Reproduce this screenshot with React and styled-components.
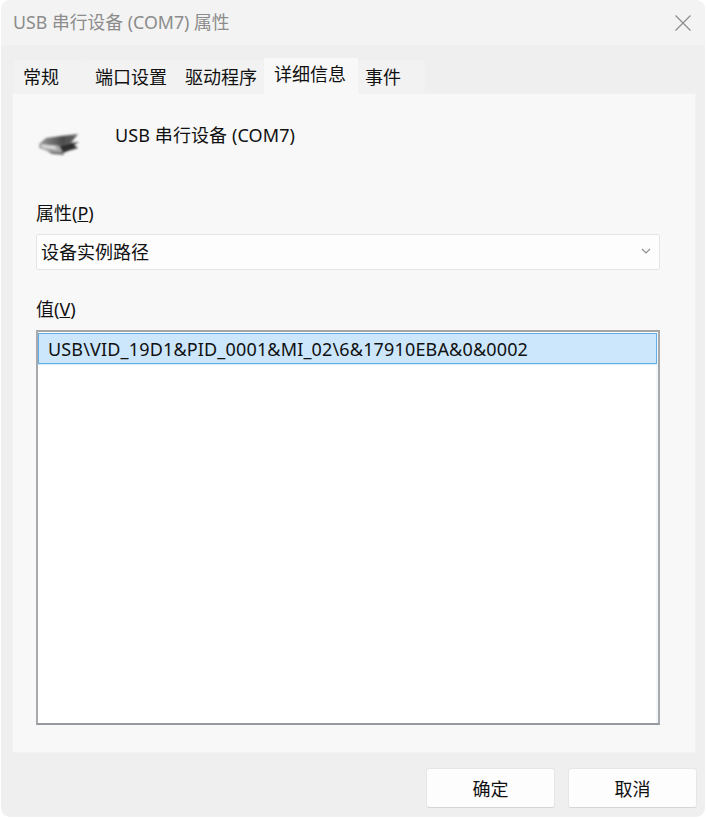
import React from 'react';
import styled, { createGlobalStyle } from 'styled-components';

const GlobalStyle = createGlobalStyle`
  html, body {
    margin: 0;
    padding: 0;
    background: #fff;
  }
  body {
    font-family: "Noto Sans", "Noto Sans CJK SC", sans-serif;
    font-size: 18px;
    color: #1a1a1a;
  }
  * {
    box-sizing: border-box;
  }
`;

const tabs = [
  { label: '常规', width: 72, inset: 8 },
  { label: '端口设置', width: 90, inset: 8 },
  { label: '驱动程序', width: 88, inset: 8 },
  { label: '详细信息', width: 94, inset: 9, active: true },
  { label: '事件', width: 67, inset: 6 },
];

const DeviceIcon = () => (
  <svg width="44" height="26" viewBox="0 0 44 26">
    <defs>
      <filter id="soft" x="-10%" y="-10%" width="120%" height="120%">
        <feGaussianBlur stdDeviation="0.8" />
      </filter>
      <linearGradient id="top" x1="0" y1="0" x2="1" y2="0">
        <stop offset="0" stopColor="#9a9a9a" />
        <stop offset="0.6" stopColor="#4c4c4c" />
        <stop offset="1" stopColor="#6a6a6a" />
      </linearGradient>
    </defs>
    <g filter="url(#soft)">
      <path d="M2 13 L9 7 L24 5 L41 3 L34 12 L22 15 Z" fill="url(#top)" />
      <path d="M2 13 L22 15 L26 21 L10 20 L2 17 Z" fill="#a8a8a8" />
      <path d="M4 14 L18 15.5 L20 18 L6 16.5 Z" fill="#e4e4e4" />
      <path d="M22 15 L34 12 L42 11 L37 14 L41 17 L31 20 L26 22 Z" fill="#2e2e2e" />
      <path d="M10 20 L26 21 L27 24 L15 23 Z" fill="#6f6f6f" />
    </g>
  </svg>
);

const App = () => (
  <>
    <GlobalStyle />
    <Window>
      <TitleBar>
        <Title>USB 串行设备 (COM7) 属性</Title>
        <CloseButton>
          <svg width="16" height="16" viewBox="0 0 16 16">
            <path d="M0.5 0.5 L15.5 15.5 M15.5 0.5 L0.5 15.5" stroke="#8b8b8b" strokeWidth="1.2" />
          </svg>
        </CloseButton>
      </TitleBar>
      <Body>
        <TabStrip>
          {tabs.map((tab) => (
            <Tab key={tab.label} $active={tab.active} $width={tab.width} $inset={tab.inset}>
              {tab.label}
            </Tab>
          ))}
        </TabStrip>
        <Panel>
          <DeviceRow>
            <IconWrapper>
              <DeviceIcon />
            </IconWrapper>
            <DeviceName>USB 串行设备 (COM7)</DeviceName>
          </DeviceRow>
          <FieldLabel>
            属性(<u>P</u>)
          </FieldLabel>
          <Select>
            <span>设备实例路径</span>
            <svg width="10" height="6" viewBox="0 0 10 6">
              <path d="M1 1 L5 5 L9 1" fill="none" stroke="#8f8f8f" strokeWidth="1.2" />
            </svg>
          </Select>
          <ValueLabel>
            值(<u>V</u>)
          </ValueLabel>
          <ListBox>
            <ListItem>USB\VID_19D1&amp;PID_0001&amp;MI_02\6&amp;17910EBA&amp;0&amp;0002</ListItem>
          </ListBox>
        </Panel>
        <Footer>
          <Button>确定</Button>
          <Button>取消</Button>
        </Footer>
      </Body>
    </Window>
  </>
);

export default App;

const Window = styled.div`
  width: 704px;
  height: 817px;
  margin-left: 1px;
  display: flex;
  flex-direction: column;
  background: #efefef;
  border-radius: 9px;
  overflow: hidden;
`;

const TitleBar = styled.div`
  height: 45px;
  flex-shrink: 0;
  display: flex;
  align-items: center;
  justify-content: space-between;
  padding: 0 14px 0 12px;
  background: #f3f3f3;
`;

const Title = styled.div`
  margin-top: -3px;
  font-size: 17.8px;
  color: #8c8c8c;
  white-space: nowrap;
`;

const CloseButton = styled.div`
  display: flex;
  width: 16px;
  height: 16px;
`;

const Body = styled.div`
  flex: 1;
  display: flex;
  flex-direction: column;
  padding: 13px 8px 9px 11px;
`;

const TabStrip = styled.div`
  height: 35px;
  padding-left: 2px;
  display: flex;
  align-items: flex-end;
  position: relative;
  z-index: 1;
`;

const Tab = styled.div`
  width: ${(p) => p.$width}px;
  height: ${(p) => (p.$active ? '36px' : '33px')};
  margin-bottom: ${(p) => (p.$active ? '-1px' : '0')};
  padding: 0 0 ${(p) => (p.$active ? '6px' : '0')} ${(p) => p.$inset}px;
  display: flex;
  align-items: center;
  font-size: 18px;
  line-height: 1;
  color: #111;
  white-space: nowrap;
  background: ${(p) => (p.$active ? '#f8f8f8' : '#f2f2f2')};
  border: 1px solid ${(p) => (p.$active ? '#f8f8f8' : '#f1f1f1')};
  border-bottom: none;
`;

const Panel = styled.div`
  width: 684px;
  height: 660px;
  flex-shrink: 0;
  display: flex;
  flex-direction: column;
  padding: 0 35px 0 23px;
  background: #f8f8f8;
  border: 1px solid #f2f2f2;
`;

const DeviceRow = styled.div`
  height: 72px;
  display: flex;
  align-items: flex-start;
`;

const IconWrapper = styled.div`
  width: 79px;
  padding: 37px 0 0 1px;
  flex-shrink: 0;
`;

const DeviceName = styled.div`
  margin-top: 28px;
  font-size: 18px;
  line-height: 26px;
  letter-spacing: 0.1px;
  color: #111;
  white-space: nowrap;
`;

const FieldLabel = styled.div`
  margin-top: 34px;
  height: 26px;
  font-size: 18px;
  line-height: 26px;
  color: #111;
`;

const ValueLabel = styled(FieldLabel)`
  margin-top: 26px;
`;

const Select = styled.div`
  width: 624px;
  height: 36px;
  margin-top: 8px;
  padding: 0 8px 2px 4px;
  display: flex;
  align-items: center;
  justify-content: space-between;
  background: #fdfdfd;
  border: 1px solid #e5e5e5;
  border-radius: 2px;
  font-size: 18px;
  color: #111;
`;

const ListBox = styled.div`
  width: 624px;
  height: 395px;
  margin-top: 8px;
  padding: 1px 1px 0 0;
  background: #fff;
  border: 2px solid #a8a9ac;
  border-bottom-color: #95989d;
  border-top-color: #a6a6a6;
  box-shadow: inset -2px 0 0 #f2f7fc;
`;

const ListItem = styled.div`
  height: 31px;
  padding-left: 9px;
  display: flex;
  align-items: center;
  background: #cce6fb;
  border: 1px solid #63aee6;
  box-shadow: 0 1px 0 #d8ebfa;
  font-size: 18px;
  letter-spacing: 0.16px;
  color: #111;
  white-space: nowrap;
`;

const Footer = styled.div`
  display: flex;
  justify-content: flex-end;
  gap: 13px;
  margin-top: 15px;
`;

const Button = styled.div`
  width: 129px;
  height: 40px;
  display: flex;
  align-items: center;
  justify-content: center;
  background: #fdfdfd;
  border: 1px solid #e6e6e6;
  border-bottom-color: #d6d6d6;
  border-radius: 3px;
  font-size: 18px;
  color: #111;
`;
